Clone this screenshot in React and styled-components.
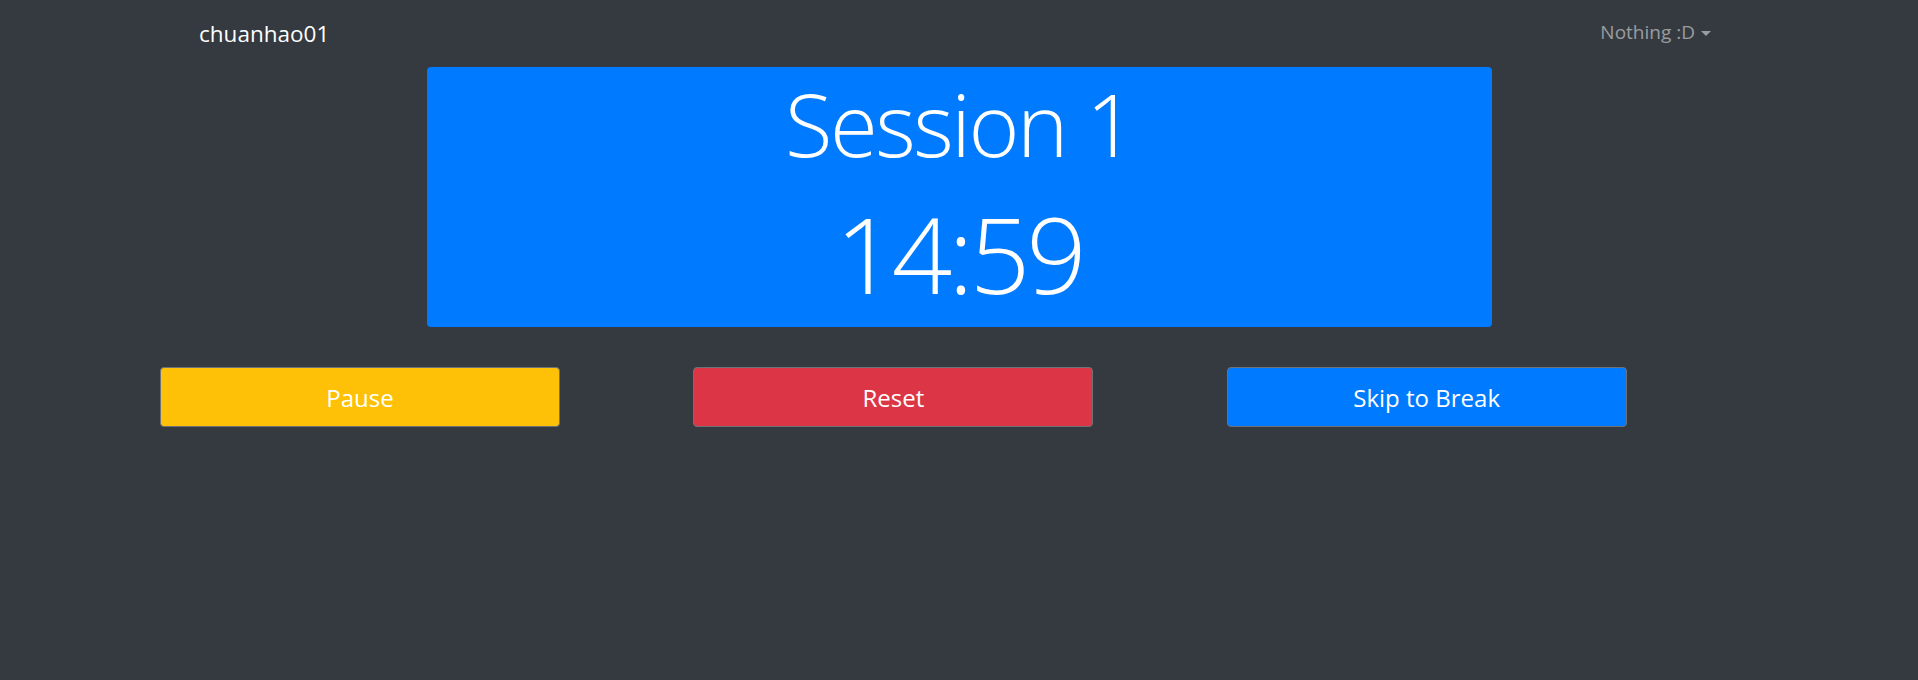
import React from 'react';
import styled, { createGlobalStyle } from 'styled-components';

const GlobalStyle = createGlobalStyle`
  html, body {
    margin: 0;
    padding: 0;
    background: #343a40;
    font-family: "Open Sans", "Noto Sans", sans-serif;
    color: #ffffff;
  }
`;

const Page = styled.div`
  width: 1918px;
  height: 680px;
  background: #343a40;
  overflow: hidden;
`;

const Navbar = styled.nav`
  height: 67px;
  display: flex;
  justify-content: space-between;
  align-items: flex-start;
  padding: 0 207px 0 199px;
  box-sizing: border-box;
`;

const Brand = styled.a`
  padding-top: 19px;
  font-size: 22.5px;
  line-height: 30px;
  color: #ffffff;
  text-decoration: none;
`;

const Dropdown = styled.a`
  padding-top: 20px;
  font-size: 19px;
  line-height: 24px;
  color: rgba(255, 255, 255, 0.5);
  display: flex;
  align-items: center;
  cursor: pointer;

  &::after {
    content: '';
    display: inline-block;
    margin-left: 6px;
    margin-top: 2px;
    border-top: 5px solid;
    border-left: 5px solid transparent;
    border-right: 5px solid transparent;
  }
`;

const TimerCard = styled.section`
  width: 1065px;
  height: 260px;
  margin: 0 auto;
  box-sizing: border-box;
  padding: 3px 0 9px;
  background: #007bff;
  border-radius: 4px;
  text-align: center;
  display: flex;
  flex-direction: column;
`;

const SessionTitle = styled.h1`
  margin: 0;
  font-size: 87px;
  font-weight: 300;
  line-height: 106px;
  letter-spacing: -2.5px;
`;

const Countdown = styled.div`
  margin-top: 12px;
  font-size: 106px;
  font-weight: 300;
  line-height: 130px;
  letter-spacing: -4px;
`;

const Controls = styled.div`
  width: 1600px;
  margin: 40px auto 0;
  display: grid;
  grid-template-columns: repeat(3, 1fr);
`;

const colours = {
  warning: '#ffc107',
  danger: '#dc3545',
  primary: '#007bff',
};

const ActionButton = styled.button`
  width: 75%;
  height: 60px;
  margin-left: 1px;
  padding: 0 16px;
  border: 1px solid #6f7275;
  border-radius: 4px;
  background: ${(p) => colours[p.$variant]};
  color: #ffffff;
  font-family: inherit;
  font-size: 24px;
  cursor: pointer;
`;

export default function App() {
  return (
    <Page>
      <GlobalStyle />
      <Navbar>
        <Brand>chuanhao01</Brand>
        <Dropdown>Nothing :D</Dropdown>
      </Navbar>
      <TimerCard>
        <SessionTitle>Session 1</SessionTitle>
        <Countdown>14:59</Countdown>
      </TimerCard>
      <Controls>
        <div><ActionButton $variant="warning">Pause</ActionButton></div>
        <div><ActionButton $variant="danger">Reset</ActionButton></div>
        <div><ActionButton $variant="primary">Skip to Break</ActionButton></div>
      </Controls>
    </Page>
  );
}
